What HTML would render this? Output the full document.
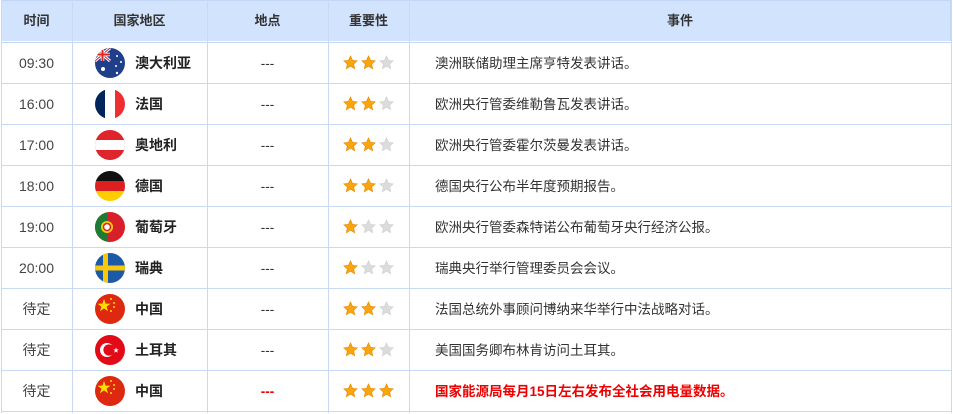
<!DOCTYPE html>
<html><head><meta charset="utf-8"><style>
*{margin:0;padding:0;box-sizing:border-box}
body{width:953px;height:414px;background:#fff;font-family:"Liberation Sans","Noto Sans CJK SC",sans-serif;position:relative;overflow:hidden;color:#333}
.hdr{position:absolute;left:1px;top:0;width:950px;height:41px;background:#d2e3fd;border:1px solid #c3d6f5;border-bottom:none}
.hl{position:absolute;left:1px;top:42px;width:950px;height:1px;background:#c3d6f5}
.vl{position:absolute;top:0;width:1px;height:413px;background:#c8d9f3}
.hline{position:absolute;left:1px;width:950px;height:1px;background:#c8d9f3}
.th{position:absolute;top:0;height:41px;line-height:41px;text-align:center;font-size:13px;font-weight:bold;color:#333}
.c{position:absolute;height:41px;line-height:41px;font-size:13.5px}
.ctr{text-align:center}
.flag{position:absolute;width:30px;height:30px;border-radius:50%;overflow:hidden}
.star{position:absolute;width:15px;height:15px}
</style></head><body>
<div class="hdr"></div>
<div class="hl"></div>
<div class="vl" style="left:1px"></div>
<div class="vl" style="left:72px"></div>
<div class="vl" style="left:207px"></div>
<div class="vl" style="left:328px"></div>
<div class="vl" style="left:409px"></div>
<div class="vl" style="left:951px"></div>
<div class="th" style="left:1px;width:71px">时间</div>
<div class="th" style="left:72px;width:135px">国家地区</div>
<div class="th" style="left:207px;width:121px">地点</div>
<div class="th" style="left:328px;width:81px">重要性</div>
<div class="th" style="left:409px;width:542px">事件</div>
<svg width="0" height="0" style="position:absolute"><defs>
<symbol id="st" viewBox="0 0 24 24"><path d="M12 1.5l3.2 7 7.6.8-5.7 5.1 1.6 7.5L12 18l-6.7 3.9 1.6-7.5L1.2 9.3l7.6-.8z"/></symbol>
</defs></svg>
<div id="rows"></div>
<script>
var R=[
["09:30","au","澳大利亚","澳洲联储助理主席亨特发表讲话。",2],
["16:00","fr","法国","欧洲央行管委维勒鲁瓦发表讲话。",2],
["17:00","at","奥地利","欧洲央行管委霍尔茨曼发表讲话。",2],
["18:00","de","德国","德国央行公布半年度预期报告。",2],
["19:00","pt","葡萄牙","欧洲央行管委森特诺公布葡萄牙央行经济公报。",1],
["20:00","se","瑞典","瑞典央行举行管理委员会会议。",1],
["待定","cn","中国","法国总统外事顾问博纳来华举行中法战略对话。",2],
["待定","tr","土耳其","美国国务卿布林肯访问土耳其。",2],
["待定","cn","中国","国家能源局每月15日左右发布全社会用电量数据。",3]];
var F={
au:'<svg width="30" height="30" viewBox="0 0 30 30"><rect width="30" height="30" fill="#1f3f8a"/><path d="M0 0L15 13M15 0L0 13" stroke="#fff" stroke-width="3"/><path d="M0 0L15 13M15 0L0 13" stroke="#d22" stroke-width="1"/><path d="M7.5 0V13M0 6.5H15" stroke="#fff" stroke-width="3.5"/><path d="M7.5 0V13M0 6.5H15" stroke="#d22" stroke-width="2"/><circle cx="8" cy="21" r="2" fill="#fff"/><circle cx="22" cy="8" r="1" fill="#fff"/><circle cx="26" cy="14" r="1" fill="#fff"/><circle cx="21" cy="18" r="1" fill="#fff"/><circle cx="22" cy="25" r="1.2" fill="#fff"/></svg>',
fr:'<svg width="30" height="30"><rect width="10" height="30" fill="#00265c"/><rect x="10" width="10" height="30" fill="#fff"/><rect x="20" width="10" height="30" fill="#ee2e30"/></svg>',
at:'<svg width="30" height="30"><rect width="30" height="30" fill="#e0242b"/><rect y="10" width="30" height="10" fill="#fff"/></svg>',
de:'<svg width="30" height="30"><rect width="30" height="10" fill="#111"/><rect y="10" width="30" height="10" fill="#dd1f1f"/><rect y="20" width="30" height="10" fill="#fc0"/></svg>',
pt:'<svg width="30" height="30"><rect width="30" height="30" fill="#d8202a"/><rect width="12" height="30" fill="#1f7a35"/><circle cx="12" cy="15" r="6" fill="#f4d000"/><circle cx="12" cy="15" r="3.5" fill="#fff" stroke="#d8202a" stroke-width="1.5"/></svg>',
se:'<svg width="30" height="30"><rect width="30" height="30" fill="#1c5aa8"/><rect x="8" width="5" height="30" fill="#f7c90a"/><rect y="12.5" width="30" height="5" fill="#f7c90a"/></svg>',
cn:'<svg width="30" height="30"><rect width="30" height="30" fill="#de2910"/><path d="M9 5l1.6 4.6 4.9.1-3.9 2.9 1.4 4.6L9 14.4l-4 2.8 1.4-4.6L2.5 9.7l4.9-.1z" fill="#ffde00"/><circle cx="16" cy="5" r="1" fill="#ffde00"/><circle cx="19" cy="9" r="1" fill="#ffde00"/><circle cx="19" cy="13" r="1" fill="#ffde00"/><circle cx="16" cy="17" r="1" fill="#ffde00"/></svg>',
tr:'<svg width="30" height="30"><rect width="30" height="30" fill="#e30a17"/><circle cx="12" cy="15" r="7" fill="#fff"/><circle cx="14" cy="15" r="5.6" fill="#e30a17"/><path d="M21 12.5l.7 2 2.1 0-1.7 1.3.6 2-1.7-1.2-1.7 1.2.6-2-1.7-1.3 2.1 0z" fill="#fff"/></svg>'};
var h='';
R.forEach(function(r,i){
 var t=43+i*41, red=i==8;
 h+='<div class="hline" style="top:'+(t+40)+'px"></div>';
 h+='<div class="c ctr" style="left:1px;width:71px;top:'+t+'px;color:#444;font-size:14px">'+r[0]+'</div>';
 h+='<div class="flag" style="left:95px;top:'+(t+5)+'px">'+F[r[1]]+'</div>';
 h+='<div class="c" style="left:135px;top:'+t+'px;font-weight:bold;color:#222;font-size:14px">'+r[2]+'</div>';
 h+='<div class="c ctr" style="left:207px;width:121px;top:'+t+'px;color:'+(red?'#e00;font-weight:bold':'#333')+'">---</div>';
 for(var s=0;s<3;s++){h+='<svg class="star" style="left:'+(343+s*18)+'px;top:'+(t+12)+'px" fill="'+(s<r[4]?'#f9a50d':'#dcdcdc')+'" stroke="'+(s<r[4]?'#e88a00':'#d0d0d0')+'" stroke-width="1"><use href="#st"/></svg>';}
 h+='<div class="c" style="left:435px;top:'+t+'px;color:'+(red?'#e00;font-weight:bold':'#333')+'">'+r[3]+'</div>';
});
document.getElementById('rows').innerHTML=h;
</script>
</body></html>
